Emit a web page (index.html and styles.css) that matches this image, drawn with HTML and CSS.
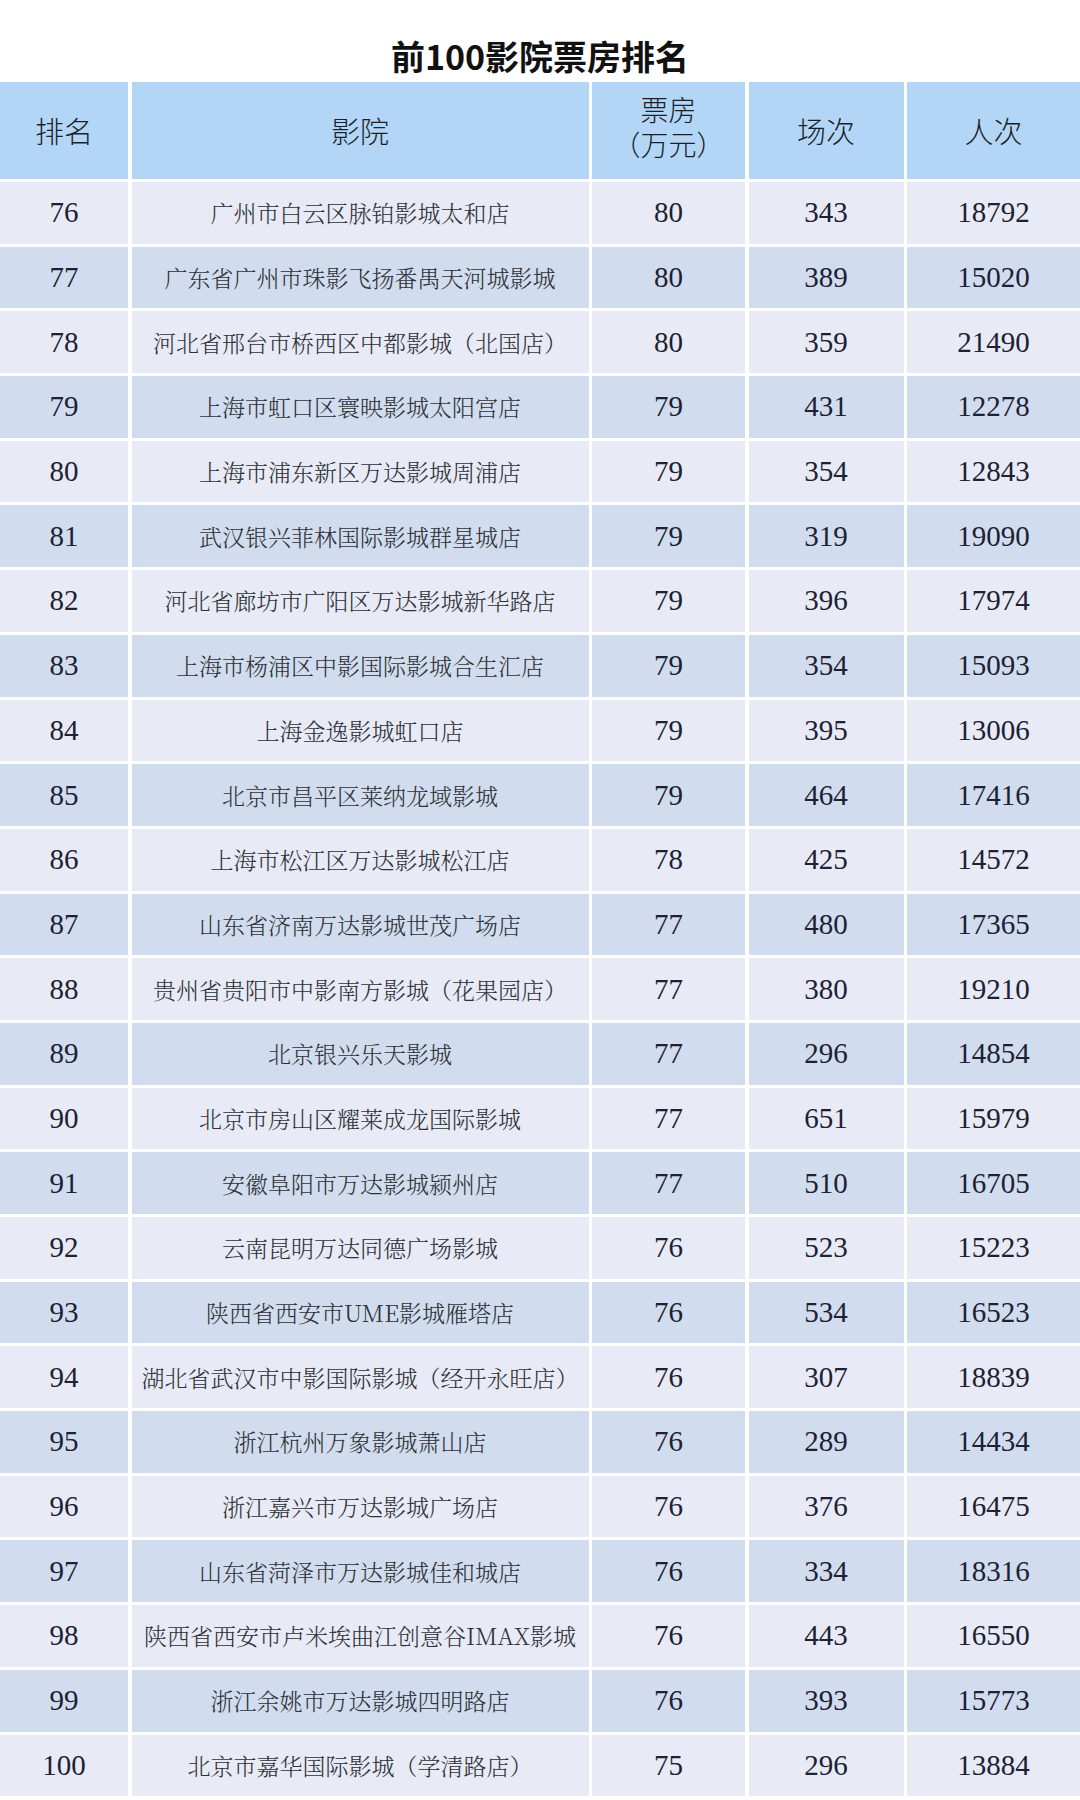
FILE: index.html
```html
<!DOCTYPE html>
<html lang="zh-CN">
<head>
<meta charset="utf-8">
<title>前100影院票房排名</title>
<link rel="stylesheet" href="styles.css">
</head>
<body>
<h1 class="title">前100影院票房排名</h1>
<div class="table">
  <div class="th">排名</div><div class="th">影院</div><div class="th th-two"><span class="line">票房</span><span class="line">（万元）</span></div><div class="th">场次</div><div class="th">人次</div>

  <div class="row odd"><div class="num">76</div><div class="name">广州市白云区脉铂影城太和店</div><div class="num">80</div><div class="num">343</div><div class="num">18792</div></div>
  <div class="row even"><div class="num">77</div><div class="name">广东省广州市珠影飞扬番禺天河城影城</div><div class="num">80</div><div class="num">389</div><div class="num">15020</div></div>
  <div class="row odd"><div class="num">78</div><div class="name">河北省邢台市桥西区中都影城（北国店）</div><div class="num">80</div><div class="num">359</div><div class="num">21490</div></div>
  <div class="row even"><div class="num">79</div><div class="name">上海市虹口区寰映影城太阳宫店</div><div class="num">79</div><div class="num">431</div><div class="num">12278</div></div>
  <div class="row odd"><div class="num">80</div><div class="name">上海市浦东新区万达影城周浦店</div><div class="num">79</div><div class="num">354</div><div class="num">12843</div></div>
  <div class="row even"><div class="num">81</div><div class="name">武汉银兴菲林国际影城群星城店</div><div class="num">79</div><div class="num">319</div><div class="num">19090</div></div>
  <div class="row odd"><div class="num">82</div><div class="name">河北省廊坊市广阳区万达影城新华路店</div><div class="num">79</div><div class="num">396</div><div class="num">17974</div></div>
  <div class="row even"><div class="num">83</div><div class="name">上海市杨浦区中影国际影城合生汇店</div><div class="num">79</div><div class="num">354</div><div class="num">15093</div></div>
  <div class="row odd"><div class="num">84</div><div class="name">上海金逸影城虹口店</div><div class="num">79</div><div class="num">395</div><div class="num">13006</div></div>
  <div class="row even"><div class="num">85</div><div class="name">北京市昌平区莱纳龙域影城</div><div class="num">79</div><div class="num">464</div><div class="num">17416</div></div>
  <div class="row odd"><div class="num">86</div><div class="name">上海市松江区万达影城松江店</div><div class="num">78</div><div class="num">425</div><div class="num">14572</div></div>
  <div class="row even"><div class="num">87</div><div class="name">山东省济南万达影城世茂广场店</div><div class="num">77</div><div class="num">480</div><div class="num">17365</div></div>
  <div class="row odd"><div class="num">88</div><div class="name">贵州省贵阳市中影南方影城（花果园店）</div><div class="num">77</div><div class="num">380</div><div class="num">19210</div></div>
  <div class="row even"><div class="num">89</div><div class="name">北京银兴乐天影城</div><div class="num">77</div><div class="num">296</div><div class="num">14854</div></div>
  <div class="row odd"><div class="num">90</div><div class="name">北京市房山区耀莱成龙国际影城</div><div class="num">77</div><div class="num">651</div><div class="num">15979</div></div>
  <div class="row even"><div class="num">91</div><div class="name">安徽阜阳市万达影城颍州店</div><div class="num">77</div><div class="num">510</div><div class="num">16705</div></div>
  <div class="row odd"><div class="num">92</div><div class="name">云南昆明万达同德广场影城</div><div class="num">76</div><div class="num">523</div><div class="num">15223</div></div>
  <div class="row even"><div class="num">93</div><div class="name">陕西省西安市UME影城雁塔店</div><div class="num">76</div><div class="num">534</div><div class="num">16523</div></div>
  <div class="row odd"><div class="num">94</div><div class="name">湖北省武汉市中影国际影城（经开永旺店）</div><div class="num">76</div><div class="num">307</div><div class="num">18839</div></div>
  <div class="row even"><div class="num">95</div><div class="name">浙江杭州万象影城萧山店</div><div class="num">76</div><div class="num">289</div><div class="num">14434</div></div>
  <div class="row odd"><div class="num">96</div><div class="name">浙江嘉兴市万达影城广场店</div><div class="num">76</div><div class="num">376</div><div class="num">16475</div></div>
  <div class="row even"><div class="num">97</div><div class="name">山东省菏泽市万达影城佳和城店</div><div class="num">76</div><div class="num">334</div><div class="num">18316</div></div>
  <div class="row odd"><div class="num">98</div><div class="name">陕西省西安市卢米埃曲江创意谷IMAX影城</div><div class="num">76</div><div class="num">443</div><div class="num">16550</div></div>
  <div class="row even"><div class="num">99</div><div class="name">浙江余姚市万达影城四明路店</div><div class="num">76</div><div class="num">393</div><div class="num">15773</div></div>
  <div class="row odd"><div class="num">100</div><div class="name">北京市嘉华国际影城（学清路店）</div><div class="num">75</div><div class="num">296</div><div class="num">13884</div></div>
</div>
</body>
</html>
```
FILE: styles.css
```css
html, body {
  margin: 0;
  padding: 0;
  background: #ffffff;
}
body {
  width: 1080px;
  height: 1800px;
  overflow: hidden;
  font-family: "Noto Sans CJK SC", sans-serif;
}
.title {
  margin: 0;
  height: 82px;
  display: flex;
  align-items: center;
  justify-content: center;
  padding-top: 30px;
  box-sizing: border-box;
  font-family: "Noto Sans CJK SC", sans-serif;
  font-weight: 700;
  font-size: 34px;
  line-height: 1;
  color: #111111;
}
.table {
  display: grid;
  grid-template-columns: 128px 457px 153px 155px 1fr;
  grid-template-rows: 97px;
  grid-auto-rows: 61.7px;
  column-gap: 3.5px;
  row-gap: 3px;
}
.row {
  display: contents;
}
.th {
  background: #b3d6f7;
  display: flex;
  align-items: center;
  justify-content: center;
  text-align: center;
  font-family: "Noto Sans CJK SC", sans-serif;
  font-weight: 300;
  font-size: 29px;
  line-height: 1.2;
  color: #1a1f2c;
}
.th-two {
  flex-direction: column;
  padding-bottom: 4px;
  box-sizing: border-box;
}
.line {
  display: block;
  font-family: "Liberation Sans", "Noto Sans CJK SC", sans-serif;
  font-size: 28px;
  line-height: 35px;
  height: 35px;
}
.row > div {
  display: flex;
  align-items: center;
  justify-content: center;
  text-align: center;
  white-space: nowrap;
}
.row.odd > div {
  background: #e8ebf5;
}
.row.even > div {
  background: #d1ddee;
}
.num {
  font-family: "Liberation Serif", "Times New Roman", serif;
  font-size: 29px;
  color: #1c2133;
}
.name {
  font-family: "Noto Serif CJK SC", "Noto Sans CJK SC", sans-serif;
  font-weight: 300;
  font-size: 23px;
  color: #2e3138;
}
```
